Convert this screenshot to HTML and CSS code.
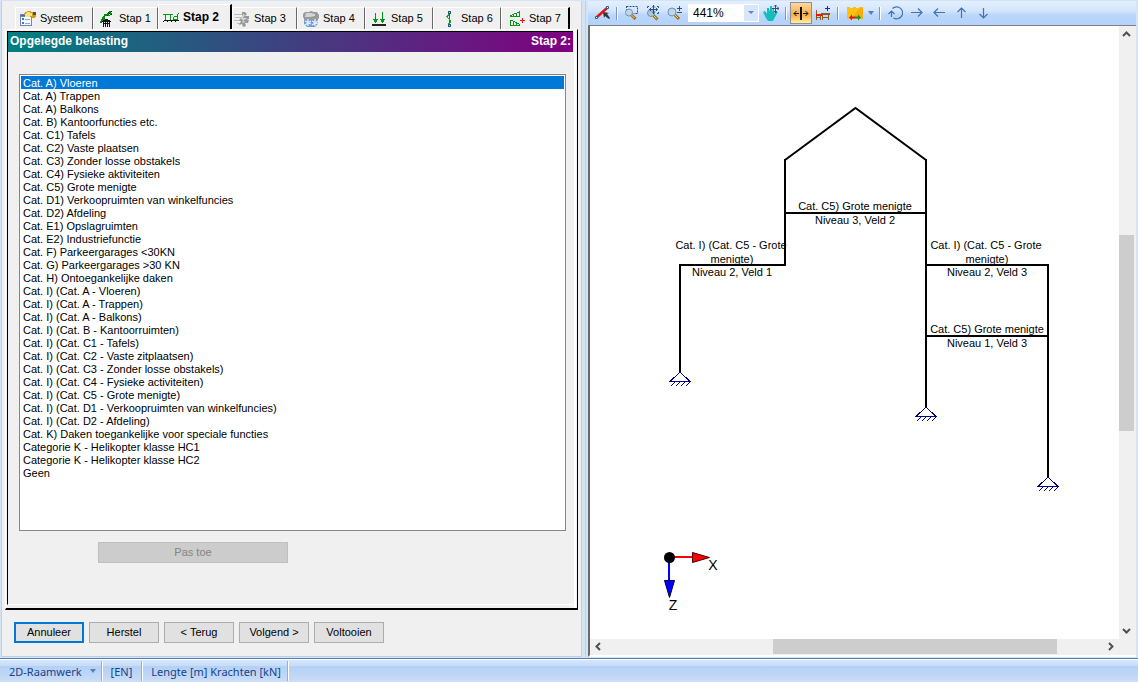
FILE: index.html
```html
<!DOCTYPE html>
<html lang="nl">
<head>
<meta charset="utf-8">
<title>2D-Raamwerk</title>
<link rel="stylesheet" href="styles.css">
</head>
<body>
<main class="workspace">
  <section class="wizard">
    <div class="tabs" role="tablist">
      <button class="tab tab-first" role="tab"><svg class="icon" viewBox="0 0 16 16" shape-rendering="crispEdges"><path fill="#6f87b4" d="M0 3h12v12H0z"/><path fill="#f4f8ff" d="M1 6h10v8H1z"/><path fill="#3969c4" d="M1 4h10v1H1z"/><path fill="#4576bd" d="M2 7h2v2H2zM2 11h2v2H2z"/><path fill="#96a8c5" d="M5 8h5v1H5zM5 12h5v1H5z"/><path fill="#d29b20" d="M4 2l4-2 5 1 3 1v4l-3 1-4-2-3 1-2-2z"/><path fill="#ffe37a" d="M5 3l3-2 4 1v3L8 6 5 6z"/><path fill="#4b5546" d="M13 1h3v3h-3z"/></svg><span>Systeem</span></button>
      <button class="tab tab-1" role="tab"><svg class="icon" viewBox="0 0 16 16" shape-rendering="crispEdges"><path fill="#008a14" d="M10 0h2v2h-2zM8 2h2v2H8zM6 3h2v2H6zM4 5h2v2H4zM3 6h2v2H3zM2 8h2v2H2zM1 10h2v2H1zM5 3h1v5H5zM4 8h4v1H4zM9 4h2v1H9zM11 2h2v2h-2z"/><path fill="#111" d="M9 1h1v1H9zM12 0h1v1h-1zM10 2h1v1h-1zM12 3h1v1h-1zM8 4h1v1H8zM4 9h7v1H4zM3 10h9v1H3zM4 11h1v5H4zM6 9h1v7H6zM8 9h1v7H8zM10 10h1v6h-1zM6 8h3v1H6zM4 12h7v1H4z"/></svg><span>Stap 1</span></button>
      <button class="tab tab-active" role="tab" aria-selected="true"><svg class="icon" viewBox="0 0 16 16" shape-rendering="crispEdges"><path fill="#009914" d="M0 5h10v1H0zM2 6h1v5H2zM7 6h1v5H7zM11 7h3v1h-3zM10 8h1v3h-1zM11 10h3v1h-3zM14 5h1v6h-1zM15 4h1v1h-1z"/><path fill="#111" d="M1 11h15v1H1zM0 13h1v-1H0zM4 13h1v-1H4zM8 13h1v-1H8zM12 13h1v-1h-1z"/></svg><span>Stap 2</span></button>
      <button class="tab tab-3" role="tab"><svg class="icon" viewBox="0 0 16 16"><path fill="none" stroke="#bcbcbc" d="M0 3.500h8M1 6.500h7M0 9.500h8M3 12.500h6"/><path fill="#979797" d="M8 1h3l2 2-2 2h4v3l-3 1h3l-1 3h-3l1 3-3 1-1-3-3 1 2-4-2-1 3-3z"/><path fill="#d5d5d5" d="M9 3l2 1-2 3h4l-4 3 3 1-4 1 1-3-2-1z"/></svg><span>Stap 3</span></button>
      <button class="tab tab-4" role="tab"><svg class="icon" viewBox="0 0 16 16"><path fill="#6c9dd8" d="M1 7h14v6l-3 3H4l-3-3z"/><path fill="#999" d="M2 1h4l2-1 3 1h3l2 3v3l-2 2H2L0 6V3z"/><path fill="#d4d4d4" d="M3 2h5l4 1v2l-5 1H2z"/><path fill="none" stroke="#edf6ff" stroke-width="1.200" d="M5 8v7M2 10l6 3M8 10l-6 4M12 8v7M9 10l6 3M15 10l-6 4"/></svg><span>Stap 4</span></button>
      <button class="tab tab-5" role="tab"><svg class="icon" viewBox="0 0 16 16" shape-rendering="crispEdges"><path fill="#009914" d="M4 2h1v10H4zM2 8h5v1H2zM3 9h3v2H3zM11 1h1v11h-1zM9 8h5v1H9zM10 9h3v2h-3z"/><path fill="#222" d="M1 13h14v2H1z"/></svg><span>Stap 5</span></button>
      <button class="tab tab-6" role="tab"><svg class="icon" viewBox="0 0 16 16" shape-rendering="crispEdges"><path fill="#26588b" d="M7 0h3v3H7zM7 13h3v3H7z"/><path fill="#9bc4e5" d="M8 1h1v1H8zM8 14h1v1H8z"/><path fill="none" stroke="#26588b" d="M8.500 3v10"/><path fill="none" stroke="#16a32b" stroke-width="1.400" d="M8 3L6 6l4 4-2 3"/></svg><span>Stap 6</span></button>
      <button class="tab tab-7" role="tab"><svg class="icon" viewBox="0 0 16 16" shape-rendering="crispEdges"><path fill="#009914" d="M1 5h10v1H1zM10 0h1v6h-1zM8 1h2v1H8zM5 2h3v1H5zM3 3h2v1H3zM1 4h2v1H1zM4 3h1v3H4zM7 2h1v4H7zM1 9h1v6H1zM1 14h10v1H1zM2 9h2v1H2zM4 10h2v1H4zM6 11h2v1H6zM8 12h2v1H8zM10 13h1v1h-1zM4 10h1v5H4zM7 11h1v4H7z"/><path fill="#e11" d="M13 7h1v5h-1zM11 9h5v1h-5z"/></svg><span>Stap 7</span></button>
    </div>

    <div class="page">
      <header class="page-title"><span>Opgelegde belasting</span><span>Stap 2:</span></header>
      <div class="page-body">
        <select class="load-list" size="31" aria-label="Opgelegde belasting">
          <option selected>Cat. A) Vloeren</option>
          <option>Cat. A) Trappen</option>
          <option>Cat. A) Balkons</option>
          <option>Cat. B) Kantoorfuncties etc.</option>
          <option>Cat. C1) Tafels</option>
          <option>Cat. C2) Vaste plaatsen</option>
          <option>Cat. C3) Zonder losse obstakels</option>
          <option>Cat. C4) Fysieke aktiviteiten</option>
          <option>Cat. C5) Grote menigte</option>
          <option>Cat. D1) Verkoopruimten van winkelfuncies</option>
          <option>Cat. D2) Afdeling</option>
          <option>Cat. E1) Opslagruimten</option>
          <option>Cat. E2) Industriefunctie</option>
          <option>Cat. F) Parkeergarages &lt;30KN</option>
          <option>Cat. G) Parkeergarages &gt;30 KN</option>
          <option>Cat. H) Ontoegankelijke daken</option>
          <option>Cat. I) (Cat. A - Vloeren)</option>
          <option>Cat. I) (Cat. A - Trappen)</option>
          <option>Cat. I) (Cat. A - Balkons)</option>
          <option>Cat. I) (Cat. B - Kantoorruimten)</option>
          <option>Cat. I) (Cat. C1 - Tafels)</option>
          <option>Cat. I) (Cat. C2 - Vaste zitplaatsen)</option>
          <option>Cat. I) (Cat. C3 - Zonder losse obstakels)</option>
          <option>Cat. I) (Cat. C4 - Fysieke activiteiten)</option>
          <option>Cat. I) (Cat. C5 - Grote menigte)</option>
          <option>Cat. I) (Cat. D1 - Verkoopruimten van winkelfuncies)</option>
          <option>Cat. I) (Cat. D2 - Afdeling)</option>
          <option>Cat. K) Daken toegankelijke voor speciale functies</option>
          <option>Categorie K - Helikopter klasse HC1</option>
          <option>Categorie K - Helikopter klasse HC2</option>
          <option>Geen</option>
        </select>
        <button class="btn btn-apply" disabled>Pas toe</button>
      </div>
    </div>

    <footer class="wizard-actions">
      <button class="btn btn-default">Annuleer</button>
      <button class="btn">Herstel</button>
      <button class="btn">&lt; Terug</button>
      <button class="btn">Volgend &gt;</button>
      <button class="btn">Voltooien</button>
    </footer>
  </section>

  <section class="viewer">
    <div class="toolbar" role="toolbar">
      <button class="tool" aria-label="Staaf"><svg class="icon" viewBox="0 0 16 16"><path stroke="#e81010" stroke-width="2.500" d="M3 12L13 3"/><path fill="#fff" stroke="#245a94" d="M1.500 11.500h2v2h-2zM12.500 1.500h2v2h-2z"/><path fill="#333" d="M9 7l6 1-2 1 3 4-1 1-4-3-1 2z"/></svg></button>
      <span class="sep"></span>
      <button class="tool" aria-label="Zoom venster"><svg class="icon" viewBox="0 0 16 16"><path fill="none" stroke="#23548c" stroke-dasharray="2 1" d="M3.500 1.500h11v7h-4M3.500 1v4"/><circle cx="6" cy="7.500" r="3.500" fill="#bcd8ee" stroke="#7690a9"/><path stroke="#a06c18" stroke-width="3" d="M8.500 10l4 4"/><path stroke="#ffd060" d="M8.500 10l3 3"/></svg></button>
      <button class="tool" aria-label="Zoom alles"><svg class="icon" viewBox="0 0 16 16"><circle cx="6" cy="8" r="3.500" fill="#a9c8e2" stroke="#7690a9"/><path fill="none" stroke="#23548c" d="M2.500 3V1.500H4M12 1.500h1.500V3M13.500 7v1.500H12M8.500 0v9M4 4.500h9M7 2.500L8.500 1 10 2.500M11 3l1.500 1.500L11 6M6 3L4.500 4.500 6 6M7 6.500L8.500 8 10 6.500"/><path stroke="#a06c18" stroke-width="3" d="M8.500 10.500l4 4"/><path stroke="#ffd060" d="M8.500 10.500l3 3"/></svg></button>
      <button class="tool" aria-label="Zoom in of uit"><svg class="icon" viewBox="0 0 16 16"><circle cx="5" cy="7" r="4" fill="#bcd8ee" stroke="#7690a9"/><path stroke="#a06c18" stroke-width="3" d="M8 10l4 4"/><path stroke="#ffd060" d="M8 10l3 3"/><path stroke="#23548c" d="M12.500 1v5M10 3.500h5M10 7.500h5"/></svg></button>
      <div class="zoom-combo"><select class="zoom-select" aria-label="Zoom"><option>441%</option></select><svg class="zoom-arrow" viewBox="0 0 14 16"><path fill="#5b87bd" d="M4 6h6L7 9z"/></svg></div>
      <button class="tool" aria-label="Verschuiven"><svg class="icon" viewBox="0 0 16 16"><path fill="#13bdb8" d="M0 7l2-1 2 3V3h2l1 4V1h2v6l1-4h1v6l2-2h2l-3 5-2 4H5l-2-3z"/><path fill="none" stroke="#23548c" d="M12.500 0v8M9 3.500h7M11 1.500L12.500 0 14 1.500M11 6l1.500 2L14 6M14.500 2L16 3.500 14.500 5"/></svg></button>
      <span class="sep sep-wide"></span>
      <button class="tool tool-on" aria-label="Afstand" aria-pressed="true"><svg class="icon" viewBox="0 0 16 16"><path fill="#111" d="M7 2h2v13H7z"/><path fill="none" stroke="#111" d="M1 8.500h5M10 8.500h5M3.500 6L1 8.500 3.500 11M12.500 6L15 8.500 12.500 11"/></svg></button>
      <button class="tool" aria-label="Meubilair"><svg class="icon" viewBox="0 0 16 16" shape-rendering="crispEdges"><path fill="#8c5a1c" d="M1 5h1v10H1zM2 12h4v1H2zM5 11h1v4H5z"/><path fill="#f01010" d="M1 9h6v2H1z"/><path fill="#8c5a1c" d="M6 8h9v2H6zM7 10h1v5H7zM13 10h1v5h-1zM8 12h5v1H8z"/><path fill="#1420f0" d="M12 1h1v5h-1zM10 3h5v1h-5z"/></svg></button>
      <span class="sep sep-wide"></span>
      <button class="tool tool-load" aria-label="Belasting"><svg class="icon" viewBox="0 0 16 16"><path fill="#ffc20c" d="M0 2h3v1h3V2h3v1h3V2h4v12H0z"/><path fill="#f08c10" opacity=".4" d="M13 3h3v11H4z"/><path fill="#e51515" d="M2 12.500l3-3v2h3v2H5v2z"/><path fill="#159629" d="M14 12.500l-3-3v2H8v2h3v2z"/></svg></button>
      <button class="tool tool-drop" aria-label="Meer"><svg class="drop-icon" viewBox="0 0 6 4"><path fill="#4f7fb8" d="M0 0h6L3 4z"/></svg></button>
      <span class="sep sep-wide"></span>
      <button class="tool" aria-label="Draaien"><svg class="icon" viewBox="0 0 16 16"><path fill="none" stroke="#3e74b4" stroke-width="1.200" d="M5.500 3.500A6 6 0 1 1 6.500 13M4.500 12V6M1.500 9l3-3 3 3"/></svg></button>
      <button class="tool" aria-label="Rechts"><svg class="icon" viewBox="0 0 16 16"><path fill="none" stroke="#3e74b4" stroke-width="1.200" d="M2 7.500h11M9 3.500l4 4-4 4"/></svg></button>
      <button class="tool" aria-label="Links"><svg class="icon" viewBox="0 0 16 16"><path fill="none" stroke="#3e74b4" stroke-width="1.200" d="M14 7.500H3M7 3.500l-4 4 4 4"/></svg></button>
      <button class="tool" aria-label="Omhoog"><svg class="icon" viewBox="0 0 16 16"><path fill="none" stroke="#3e74b4" stroke-width="1.200" d="M8.500 13V3M4.500 7l4-4 4 4"/></svg></button>
      <button class="tool" aria-label="Omlaag"><svg class="icon" viewBox="0 0 16 16"><path fill="none" stroke="#3e74b4" stroke-width="1.200" d="M8.500 3v10M4.500 9l4 4 4-4"/></svg></button>
    </div>

    <div class="canvas-frame">
      <svg class="drawing" viewBox="590 26 529 612" preserveAspectRatio="xMinYMin meet" role="img" aria-label="Raamwerk">
        <defs>
          <g id="support" fill="none" stroke="#00008b" shape-rendering="crispEdges">
            <path d="M0 0L-10 9.500H10Z"/>
            <path d="M-5 10l-4 4M0 10l-4 4M5 10l-4 4M10 10l-4 4"/>
          </g>
        </defs>
        <path class="member" d="M785 160L855.500 108L926 160"/>
        <path class="member member-grid" d="M785 159V266M785 213H926M680 265H786M680 264V372M926 159V407M926 265H1049M1048 264V477M926 336H1048"/>
        <use href="#support" x="680" y="372"/>
        <use href="#support" x="926" y="407"/>
        <use href="#support" x="1048" y="477"/>
        <g class="label">
          <text x="855" y="210">Cat. C5) Grote menigte</text>
          <text x="855" y="224">Niveau 3, Veld 2</text>
          <text x="731" y="249">Cat. I) (Cat. C5 - Grote</text>
          <text x="732" y="263">menigte)</text>
          <text x="732" y="276">Niveau 2, Veld 1</text>
          <text x="986" y="249">Cat. I) (Cat. C5 - Grote</text>
          <text x="987" y="263">menigte)</text>
          <text x="987" y="276">Niveau 2, Veld 3</text>
          <text x="987" y="333">Cat. C5) Grote menigte</text>
          <text x="987" y="347">Niveau 1, Veld 3</text>
        </g>
        <path stroke="#f00" stroke-width="2" d="M669 557H693"/>
        <path stroke="#00f" stroke-width="2" d="M669 557V581"/>
        <path fill="#f00" stroke="#400" d="M692.500 552.500L709.500 557.500L692.500 562.500Z"/>
        <path fill="#00f" stroke="#004" d="M664.500 580.500H674.500L669.500 597.500Z"/>
        <circle cx="669.500" cy="557.500" r="5.500"/>
        <text class="axis" x="713" y="570">X</text>
        <text class="axis" x="673" y="610">Z</text>
      </svg>
      <div class="scroll scroll-v">
        <button class="scroll-btn" aria-label="Scroll omhoog"><svg class="chevron" viewBox="0 0 9 9"><path d="M1 6l3.500-3.500L8 6"/></svg></button>
        <span class="thumb"></span>
        <button class="scroll-btn" aria-label="Scroll omlaag"><svg class="chevron" viewBox="0 0 9 9"><path d="M1 3l3.500 3.500L8 3"/></svg></button>
      </div>
      <div class="scroll scroll-h">
        <button class="scroll-btn" aria-label="Scroll links"><svg class="chevron" viewBox="0 0 9 9"><path d="M6 1L2.500 4.500L6 8"/></svg></button>
        <span class="thumb"></span>
        <button class="scroll-btn" aria-label="Scroll rechts"><svg class="chevron" viewBox="0 0 9 9"><path d="M3 1l3.500 3.500L3 8"/></svg></button>
      </div>
    </div>
  </section>
</main>
<footer class="statusbar">
  <button class="status status-menu"><span>2D-Raamwerk</span><svg class="drop-icon" viewBox="0 0 6 4"><path fill="#5580b5" d="M0 0h6L3 4z"/></svg></button>
  <button class="status">[EN]</button>
  <button class="status status-units">Lengte [m] Krachten [kN]</button>
</footer>
</body>
</html>
```
FILE: styles.css
```css
* { box-sizing: border-box; }

body {
  margin: 0;
  min-height: 100vh;
  display: flex;
  flex-direction: column;
  background: #d5e4f5;
  color: #000;
  font: 11px/13px "Liberation Sans", Arial, sans-serif;
}

button, select {
  font: inherit;
  color: inherit;
  border: 0;
  border-radius: 0;
  margin: 0;
  padding: 0;
  background: none;
}

.icon { width: 16px; height: 16px; flex: none; }
.drop-icon { width: 6px; height: 4px; flex: none; }

.workspace {
  flex: 1;
  display: grid;
  grid-template-columns: minmax(0, 585fr) minmax(0, 553fr);
}

/* Wizard */
.wizard {
  display: flex;
  flex-direction: column;
  margin: 1px 3px 1px 1px;
  padding: 3px 3px 0;
  border: 1px solid #b9d1ec;
  border-top: 0;
  background: #f0f0f0;
}

.tabs {
  display: flex;
  align-items: flex-end;
  height: 25px;
  padding-left: 10px;
}

.tab {
  display: flex;
  align-items: center;
  gap: 4px;
  height: 22px;
  padding: 0 0 0 7px;
  width: 68px;
  border-top: 1px solid #fff;
  border-left: 1px solid #fff;
  border-right: 1px solid #696969;
  background: #f0f0f0;
  white-space: nowrap;
}

.tab-first { width: 78px; padding-left: 4px; }
.tab-1 { width: 65px; padding-left: 5px; }
.tab-3 { width: 65px; padding-left: 1px; }
.tab-4, .tab-5 { padding-left: 5px; }
.tab-7 { width: 69px; border-right: 2px solid #000; }

.tab-active {
  height: 25px;
  width: 74px;
  padding: 0 0 0 4px;
  border-right: 2px solid #000;
  font-weight: bold;
  font-size: 12px;
}

.page {
  flex: 1;
  display: flex;
  flex-direction: column;
  border: 1px solid #fff;
  border-right-color: #000;
  border-bottom: 2px solid #000;
  padding: 1px 4px 3px 1px;
  background: linear-gradient(#fff, #fff) right 1px top / 2px 100% no-repeat, #f0f0f0;
}

.page-title {
  display: flex;
  justify-content: space-between;
  height: 21px;
  padding: 2px 2px 0 2px;
  border-top: 1px solid #000;
  border-left: 1px solid #000;
  background: linear-gradient(90deg, #008080, #800080);
  color: #fff;
  font: bold 12px/14px "Liberation Sans", Arial, sans-serif;
}

.page-body {
  flex: 1;
  display: flex;
  flex-direction: column;
  align-items: flex-start;
  padding: 22px 7px 41px 11px;
  border-left: 1px solid #000;
  border-bottom: 1px solid #fff;
}

.load-list {
  flex: 1;
  align-self: stretch;
  appearance: none;
  padding: 1px;
  border: 1px solid #828790;
  background: #fff;
  overflow: hidden;
  outline: 0;
}

.load-list option {
  height: 13px;
  min-height: 13px;
  padding: 1px 2px 0;
  line-height: 13px;
}

.load-list option:checked {
  background: #0078d7 linear-gradient(#0078d7, #0078d7);
  color: #fff;
}

.btn {
  width: 70px;
  height: 21px;
  border: 1px solid #adadad;
  background: #e1e1e1;
  text-align: center;
}

.btn-default { border: 2px solid #0078d7; }

.btn-apply {
  width: 190px;
  margin: 11px 0 0 79px;
  border-color: #bfbfbf;
  background: #ccc;
  color: #838383;
}

.wizard-actions {
  display: flex;
  gap: 5px;
  padding: 12px 9px 13px;
}

/* Viewer */
.viewer {
  display: flex;
  flex-direction: column;
  margin: 1px 1px 1px 0;
  border-left: 1px solid #b9d1ec;
  padding: 0 1px 0 2px;
}

.toolbar {
  display: flex;
  align-items: center;
  height: 24px;
  padding-left: 3px;
  background: linear-gradient(#e3efff, #d5e5fb 40%, #b9d6fb 60%, #b4d2fc);
}

.tool {
  display: flex;
  align-items: center;
  justify-content: center;
  width: 22px;
  height: 22px;
  flex: none;
}

.tool-on {
  border: 1px solid #8e8f8f;
  background: linear-gradient(#fcd8a4, #fbb65c 45%, #fbab48 60%, #fff0a0);
}

.tool-load { margin-left: 2px; }
.tool-drop { width: 10px; }

.sep {
  flex: none;
  width: 7px;
  height: 13px;
  background: linear-gradient(90deg, #6e99cf 50%, #fff 50%) center / 2px 100% no-repeat;
}
.sep-wide { width: 8px; }

.zoom-combo {
  display: flex;
  width: 71px;
  height: 18px;
  margin: 0 1px 0 2px;
  padding: 1px;
  background: #fff;
}

.zoom-select {
  flex: 1;
  min-width: 0;
  appearance: none;
  padding-left: 4px;
  font-size: 12px;
  background: #fff;
}

.zoom-arrow { width: 14px; height: 16px; background: #d7e6fa; }

.canvas-frame {
  flex: 1;
  display: grid;
  grid-template: minmax(0, 1fr) 16px / minmax(0, 1fr) 17px;
  border-top: 1px solid #808080;
  border-left: 2px solid #696969;
  border-bottom: 2px solid #fff;
  background: #f0f0f0;
}

.drawing { width: 100%; height: 0; min-height: 100%; background: #fff; }
.member { fill: none; stroke: #000; stroke-width: 2; }
.member-grid { shape-rendering: crispEdges; }
.label { font-size: 11px; text-anchor: middle; }
.axis { font-size: 14px; text-anchor: middle; }

.scroll { display: grid; }
.scroll-v { grid-template-rows: 17px 191fr 196fr 190fr 17px; padding-right: 2px; }
.scroll-h { grid-template-columns: 17px 166fr 284fr 45fr 17px; padding-bottom: 1px; }
.scroll-v .thumb { grid-row: 3; }
.scroll-v .scroll-btn:last-child { grid-row: 5; }
.scroll-h .thumb { grid-column: 3; }
.scroll-h .scroll-btn { grid-row: 1; }
.scroll-h .scroll-btn:last-child { grid-column: 5; }
.thumb { background: #cdcdcd; }
.scroll-btn { display: flex; align-items: center; justify-content: center; }
.chevron { width: 9px; height: 9px; fill: none; stroke: #505050; stroke-width: 2; }

/* Status bar */
.statusbar {
  display: flex;
  align-items: stretch;
  height: 24px;
  border-top: 1px solid #567db0;
  background: linear-gradient(#fff 1px, #d7e6f9 1px, #c7dcf8 7px, #b3d0f5 7px, #c5daf6 20px, #cddff7);
  color: #15428b;
  font-family: "Noto Sans", "Open Sans", sans-serif;
}

.status {
  display: flex;
  align-items: center;
  margin: 2px 0 1px;
  padding: 0 9px;
  border-right: 1px solid #8db0dc;
  box-shadow: 1px 0 #fff;
}

.status-menu { gap: 8px; padding-right: 5px; }
.status-units { padding-right: 6px; }
```
